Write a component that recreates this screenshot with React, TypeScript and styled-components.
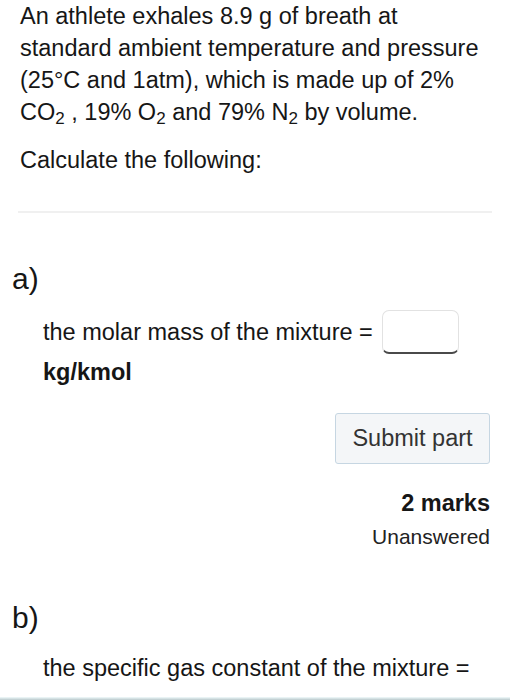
import styled, { createGlobalStyle } from 'styled-components';

const GlobalStyle = createGlobalStyle`
  html, body {
    margin: 0;
    padding: 0;
    background: #fff;
  }
  body {
    font-family: "Liberation Sans", Arial, sans-serif;
    color: #161616;
    -webkit-font-smoothing: antialiased;
  }
`;

const Page = styled.div`
  width: 510px;
  height: 700px;
  overflow: hidden;
  display: flex;
  flex-direction: column;
  position: relative;
`;

const Intro = styled.div`
  padding: 0 10px 0 20px;
`;

const Para = styled.p`
  margin: 0;
  font-size: 23.5px;
  line-height: 32px;
  white-space: nowrap;
  & + & {
    margin-top: 16px;
  }
  sub {
    font-size: 17px;
    vertical-align: -4px;
    line-height: 0;
  }
`;

const Rule = styled.hr`
  border: none;
  border-top: 2px solid #f0f0f0;
  margin: 35px 18px 0 18px;
`;

const Part = styled.section<{ $top: number }>`
  margin-top: ${(p) => p.$top}px;
  display: flex;
  flex-direction: column;
`;

const PartLabel = styled.div`
  font-size: 30px;
  line-height: 34px;
  padding-left: 12px;
`;

const PartBody = styled.div`
  padding: 0 20px 0 43px;
  display: flex;
  flex-direction: column;
`;

const QuestionLine = styled.div<{ $top: number }>`
  margin-top: ${(p) => p.$top}px;
  display: flex;
  align-items: center;
  font-size: 23.5px;
  line-height: 30px;
  white-space: nowrap;
`;

const AnswerBox = styled.input`
  margin-left: 9px;
  width: 77px;
  height: 44px;
  box-sizing: border-box;
  border: 1px solid #e2e2e2;
  border-bottom: 2px solid #4a4a4a;
  border-radius: 7px;
  background: #fff;
  outline: none;
  flex: none;
`;

const Unit = styled.div`
  font-size: 23.5px;
  font-weight: bold;
  line-height: 30px;
  margin-top: 3px;
`;

const Actions = styled.div`
  display: flex;
  flex-direction: column;
  align-items: flex-end;
  margin-top: 26px;
`;

const SubmitButton = styled.button`
  width: 155px;
  height: 51px;
  background: #f4f6f8;
  border: 1px solid #c6d6e2;
  border-radius: 3px;
  font-family: "Liberation Sans", Arial, sans-serif;
  font-size: 23.5px;
  color: #333;
  padding: 0;
`;

const Marks = styled.div`
  margin-top: 24px;
  font-size: 23.5px;
  font-weight: bold;
  line-height: 30px;
`;

const Status = styled.div`
  margin-top: 4px;
  font-size: 21px;
  line-height: 30px;
  color: #222;
`;

const BottomEdge = styled.div`
  position: absolute;
  left: 0;
  right: 0;
  bottom: 0;
  height: 3px;
  background: linear-gradient(#f2fbfc, #b9c9cc);
`;

export default function App() {
  return (
    <>
      <GlobalStyle />
      <Page>
        <Intro>
          <Para>
            An athlete exhales 8.9 g of breath at
            <br />
            standard ambient temperature and pressure
            <br />
            (25°C and 1atm), which is made up of 2%
            <br />
            CO<sub>2</sub> , 19% O<sub>2</sub> and 79% N<sub>2</sub> by volume.
          </Para>
          <Para>Calculate the following:</Para>
        </Intro>
        <Rule />
        <Part $top={49}>
          <PartLabel>a)</PartLabel>
          <PartBody>
            <QuestionLine $top={14}>
              the molar mass of the mixture =
              <AnswerBox aria-label="answer a" />
            </QuestionLine>
            <Unit>kg/kmol</Unit>
            <Actions>
              <SubmitButton>Submit part</SubmitButton>
              <Marks>2 marks</Marks>
              <Status>Unanswered</Status>
            </Actions>
          </PartBody>
        </Part>
        <Part $top={49}>
          <PartLabel>b)</PartLabel>
          <PartBody>
            <QuestionLine $top={18}>the specific gas constant of the mixture =</QuestionLine>
          </PartBody>
        </Part>
        <BottomEdge />
      </Page>
    </>
  );
}
